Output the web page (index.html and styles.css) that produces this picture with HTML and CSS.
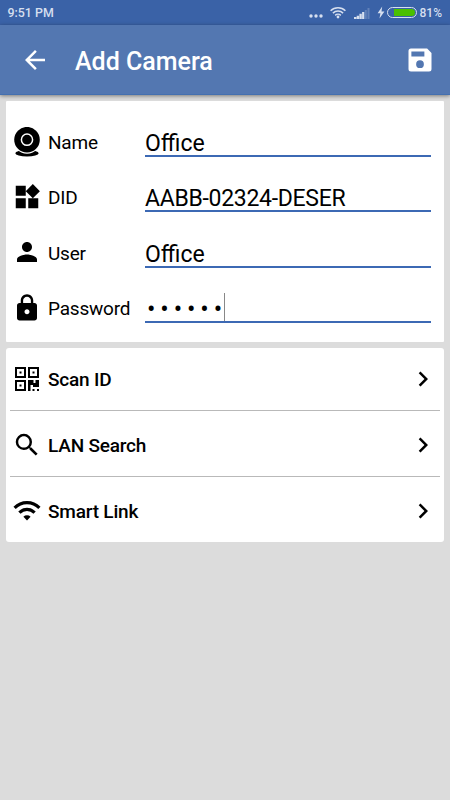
FILE: index.html
```html
<!DOCTYPE html>
<html lang="en">
<head>
<meta charset="utf-8">
<title>Add Camera</title>
<link rel="stylesheet" href="styles.css">
</head>
<body>
<div class="status">
  <span class="time">9:51 PM</span>
  <svg class="more" width="14" height="4" viewBox="0 0 14 4" fill="currentColor"><circle cx="2" cy="2" r="1.7"/><circle cx="7" cy="2" r="1.7"/><circle cx="12" cy="2" r="1.7"/></svg>
  <svg class="signal-wifi" width="16" height="13" viewBox="0 0 16 13" fill="none" stroke="currentColor" stroke-width="1.5"><path d="M.6 4.7a10.5 10.5 0 0 1 14.8 0M2.9 7.1a7.2 7.2 0 0 1 10.2 0M5.2 9.4a4 4 0 0 1 5.6 0"/><circle cx="8" cy="11" r="1.4" fill="currentColor" stroke="none"/></svg>
  <svg class="cell" width="16" height="11" viewBox="0 0 16 11" fill="currentColor"><path d="M0 9h2.400v2H0zM2.700 7.700h2.400V11H2.700zM5.400 5.800h2.400V11H5.400zM8.100 4h2.200v7H8.100z"/><path opacity=".25" d="M10.800 2h2v9h-2zM13.500 0h2v11h-2z"/></svg>
  <svg class="bolt" width="8" height="13" viewBox="0 0 8 13" fill="currentColor"><path d="M5.2 0.5L.6 7.2h2.8L2.5 12.5 7.4 5.6H4.5z"/></svg>
  <span class="battery"><span class="charge"></span></span>
  <span class="percent">81%</span>
</div>
<header class="bar">
  <svg class="icon" viewBox="0 0 24 24"><path d="M20 11H7.83l5.59-5.59L12 4l-8 8 8 8 1.41-1.41L7.83 13H20v-2z"/></svg>
  <h1>Add Camera</h1>
  <svg class="icon" viewBox="0 0 24 24"><path fill-rule="evenodd" d="M17.7 2.8H4.8a2 2 0 0 0-2 2v14.4a2 2 0 0 0 2 2h14.4a2 2 0 0 0 2-2V6.3zM5.1 5.1h10.4v4H5.1zM12 12.2a3.1 3.1 0 1 1 0 6.2 3.1 3.1 0 0 1 0-6.2z"/></svg>
</header>
<main>
  <section class="card form">
    <div class="field">
      <svg class="icon" viewBox="0 0 30 30"><ellipse cx="15" cy="26.2" rx="11.7" ry="3.2"/><circle cx="15" cy="13.3" r="13.4" fill="#fff"/><circle cx="15" cy="12.7" r="12.8"/><circle cx="15" cy="12.7" r="5.6" fill="none" stroke="#fff" stroke-width="1.5"/></svg>
      <span class="label">Name</span><span class="value">Office</span>
    </div>
    <div class="field">
      <svg class="icon" viewBox="0 0 24 24"><path d="M13 13v8h8v-8h-8zM3 21h8v-8H3v8zM3 3v8h8V3H3zm13.66-1.31L11 7.34 16.66 13l5.66-5.66-5.66-5.65z"/></svg>
      <span class="label raised">DID</span><span class="value device-id">AABB-02324-DESER</span>
    </div>
    <div class="field">
      <svg class="icon" viewBox="0 0 24 24"><path d="M12 12c2.21 0 4-1.79 4-4s-1.79-4-4-4-4 1.79-4 4 1.79 4 4 4zm0 2c-2.67 0-8 1.34-8 4v2h16v-2c0-2.66-5.33-4-8-4z"/></svg>
      <span class="label">User</span><span class="value">Office</span>
    </div>
    <div class="field">
      <svg class="icon" viewBox="0 0 24 24"><path d="M18 8h-1V6c0-2.76-2.24-5-5-5S7 3.24 7 6v2H6c-1.100 0-2 .9-2 2v10c0 1.100.9 2 2 2h12c1.100 0 2-.9 2-2V10c0-1.100-.9-2-2-2zm-6 9c-1.100 0-2-.9-2-2s.9-2 2-2 2 .9 2 2-.9 2-2 2zm3.100-9H8.900V6c0-1.710 1.390-3.100 3.100-3.100s3.100 1.390 3.100 3.100v2z"/></svg>
      <span class="label">Password</span><span class="value secret"><span class="dots">••••••</span><span class="caret"></span></span>
    </div>
  </section>
  <section class="card menu">
    <div class="item">
      <svg class="icon" viewBox="0 0 30 30"><path fill-rule="evenodd" d="M3 3h11v11H3zM5 5v7h7V5zM16 3h11v11H16zM18 5v7h7V5zM3 16h11v11H3zM5 18v7h7v-7z"/><path d="M7.5 7.5h2v2h-2zM20.5 7.5h2v2h-2zM7.5 20.5h2v2h-2zM16 16h5.500v3h2v-3H27v7h-6v-2h-2.500v6H16zM20.500 25h2v2h-2zM25 25h2v2h-2z"/></svg>
      <span class="name">Scan ID</span>
      <svg class="icon" viewBox="0 0 24 24"><path d="M10 6L8.59 7.41 13.17 12l-4.58 4.59L10 18l6-6z"/></svg>
    </div>
    <div class="item">
      <svg class="icon" viewBox="0 0 24 24"><path d="M15.5 14h-.79l-.28-.27A6.471 6.471 0 0 0 16 9.5 6.5 6.5 0 1 0 9.5 16c1.610 0 3.090-.59 4.230-1.570l.27.28v.79l5 4.990L20.490 19l-4.990-5zm-6 0C7.010 14 5 11.990 5 9.500S7.010 5 9.500 5 14 7.010 14 9.500 11.990 14 9.500 14z"/></svg>
      <span class="name lowered">LAN Search</span>
      <svg class="icon" viewBox="0 0 24 24"><path d="M10 6L8.59 7.41 13.17 12l-4.58 4.59L10 18l6-6z"/></svg>
    </div>
    <div class="item">
      <svg class="icon" viewBox="0 0 30 30"><path fill="none" stroke="#000" stroke-width="3.2" d="M2.6 11.8a17.500 17.500 0 0 1 24.800 0M7.400 16.600a10.700 10.700 0 0 1 15.200 0"/><path d="M11.400 20.800a5.100 5.100 0 0 1 7.200 0L15 24.500z"/></svg>
      <span class="name">Smart Link</span>
      <svg class="icon" viewBox="0 0 24 24"><path d="M10 6L8.59 7.41 13.17 12l-4.58 4.59L10 18l6-6z"/></svg>
    </div>
  </section>
</main>
</body>
</html>
```
FILE: styles.css
```css
* { box-sizing: border-box; }
body {
  margin: 0;
  min-height: 800px;
  background: #dcdcdc;
  color: #000;
  font-family: Roboto, sans-serif;
}
.icon { flex: none; display: block; width: 30px; height: 30px; fill: currentColor; }
.status {
  display: flex;
  align-items: center;
  height: 25px;
  padding: 0 8px 0 7.5px;
  background: #3a62a7;
  color: #d6dfef;
  font-size: 12px;
  font-weight: 500;
}
.time { margin-right: auto; font-size: 12.4px; }
.more { margin: 7px 7.5px 0 0; }
.signal-wifi { margin-right: 7.5px; }
.cell { margin: 2px 7px 0 0; }
.bolt { margin-right: 2px; }
.battery {
  width: 30px;
  height: 11px;
  margin-right: 3px;
  padding: 1px 1px 1px 6px;
  border: 1px solid #d6dfef;
  border-radius: 6px;
}
.charge { display: block; height: 7px; border-radius: 0 4px 4px 0; background: #4ac000; }
.bar {
  display: flex;
  align-items: center;
  height: 70px;
  padding: 0 15px 0 20px;
  background: #5377b1;
  border-bottom: 1px solid #4470b0;
  color: #fff;
  box-shadow: 0 1px 4px rgba(0, 0, 0, .45);
}
h1 { flex: 1; margin: 0 0 0 25px; padding-top: 4px; font-size: 25px; font-weight: 500; line-height: 30px; }
main { display: flex; flex-direction: column; gap: 6px; padding: 6px 6px 0; }
.card { background: #fff; border-radius: 3px; }
.form { height: 241px; padding: 13px 13px 0 6px; border-radius: 1px; }
.field { display: flex; align-items: center; height: 55.4px; }
.label { width: 97px; margin-left: 6px; padding-top: 2px; font-size: 19px; letter-spacing: -.2px; }
.label.raised { padding-top: 0; }
.value {
  display: flex;
  flex: 1;
  height: 30px;
  align-self: flex-end;
  margin-bottom: 12.5px;
  border-bottom: 2px solid #3c69b4;
  font-size: 23px;
  line-height: 34px;
}
.device-id { letter-spacing: -.3px; }
.dots { padding-left: 2px; margin-right: -3px; font-size: 25px; letter-spacing: 4.9px; }
.caret { width: 1px; background: #888; }
.menu { height: 194px; padding: 0 4px; }
.item { display: flex; align-items: center; height: 66px; padding: 2px 2.5px 0 1.5px; border-bottom: 1px solid #b9b9b9; }
.item .icon:first-child { margin-left: .5px; }
.item:first-child { height: 63px; padding-top: 0; }
.item:last-child { border: 0; }
.name { flex: 1; margin-left: 6px; font-size: 19px; font-weight: 500; letter-spacing: -.2px; }
.name.lowered { padding-top: 2px; }
```
